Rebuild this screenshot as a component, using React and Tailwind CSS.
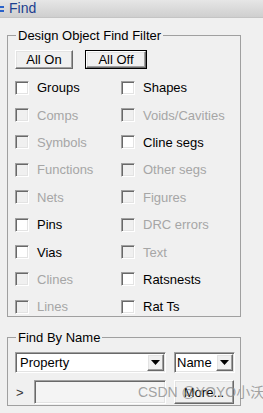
import React from "react";

const rows = [
  ["Groups", true, "Shapes", true],
  ["Comps", false, "Voids/Cavities", false],
  ["Symbols", false, "Cline segs", true],
  ["Functions", false, "Other segs", false],
  ["Nets", false, "Figures", false],
  ["Pins", true, "DRC errors", false],
  ["Vias", true, "Text", false],
  ["Clines", false, "Ratsnests", true],
  ["Lines", false, "Rat Ts", true],
];

const sunken =
  "border border-t-[#a0a0a0] border-l-[#a0a0a0] border-b-white border-r-white shadow-[inset_1px_1px_0_#696969,inset_-1px_-1px_0_#e3e3e3]";
const raised =
  "border border-t-white border-l-white border-b-[#696969] border-r-[#696969] shadow-[inset_-1px_-1px_0_#a0a0a0,inset_1px_1px_0_#e3e3e3]";

const Check = ({ label, on }) => (
  <div className="flex items-center h-[27.4px]">
    <span className={`w-[14px] h-[14px] shrink-0 ${sunken} ${on ? "bg-white" : "bg-[#f0f0f0]"}`} />
    <span className={`ml-[8px] ${on ? "text-black" : "text-[#a6a6a6]"}`}>{label}</span>
  </div>
);

const Arrow = () => (
  <span className={`w-[17px] h-[17px] flex items-center justify-center bg-[#f0f0f0] ${raised}`}>
    <svg width="9" height="5" viewBox="0 0 9 5">
      <path d="M0 0h9L4.5 5z" fill="#000" />
    </svg>
  </span>
);

export default function App() {
  return (
    <div
      className="relative w-[263px] h-[413px] overflow-hidden bg-[#f0f0f0] text-[13px] leading-[15px] text-black"
      style={{ fontFamily: '"Liberation Sans", Arial, sans-serif' }}
    >
      <div className="h-[18px] flex items-center bg-gradient-to-b from-[#e6e6e6] to-[#cfcfcf] border-b border-[#c4c4c4]">
        <div className="flex flex-col gap-[2px] w-[4px]">
          <span className="h-[2px] bg-[#2a62c9]" />
          <span className="h-[2px] bg-[#2a62c9]" />
        </div>
        <span className="ml-[5px] text-[14px] text-[#1d3f8f]">Find</span>
      </div>

      <fieldset className="mt-[10px] mx-[7px] w-[234px] h-[289px] border border-[#a0a0a0] p-0 m-0">
        <legend className="ml-[8px] px-[2px]">Design Object Find Filter</legend>
        <div className="flex pl-[7px] pt-[7px] gap-[12px]">
          <button className={`w-[58px] h-[19px] flex items-center justify-center bg-[#f0f0f0] ${raised}`}>All On</button>
          <div className="border border-black">
            <button className={`w-[60px] h-[17px] flex items-center justify-center bg-[#f0f0f0] ${raised}`}>All Off</button>
          </div>
        </div>
        <div className="grid grid-cols-[106px_1fr] pl-[7px] mt-[5px]">
          {rows.map(([l, lo, r, ro]) => (
            <React.Fragment key={l}>
              <Check label={l} on={lo} />
              <Check label={r} on={ro} />
            </React.Fragment>
          ))}
        </div>
      </fieldset>

      <fieldset className="mt-[13px] mx-[7px] w-[234px] h-[76px] border border-[#a0a0a0] p-0">
        <legend className="ml-[8px] px-[2px]">Find By Name</legend>
        <div className="flex pl-[7px] pt-[7px] gap-[8px]">
          <div className={`w-[151px] h-[21px] flex items-center justify-between bg-white pl-[4px] pr-[1px] ${sunken}`}>
            <span>Property</span>
            <Arrow />
          </div>
          <div className={`w-[61px] h-[21px] flex items-center justify-between bg-white pl-[2px] pr-[1px] ${sunken}`}>
            <span>Name</span>
            <Arrow />
          </div>
        </div>
        <div className="flex items-center pl-[8px] pt-[7px]">
          <span className="w-[18px] text-[#333]">&gt;</span>
          <div className={`w-[132px] h-[24px] bg-[#f4f4f4] ${sunken}`} />
          <button className={`ml-[8px] w-[60px] h-[24px] flex items-center justify-center bg-[#f0f0f0] ${raised}`}>More...</button>
        </div>
      </fieldset>

      <div
        className="absolute left-[138px] top-[384px] text-[14px] leading-[17px] text-[#8c8c8c]/80 whitespace-nowrap pointer-events-none"
        style={{ fontFamily: '"Liberation Sans", "Noto Sans CJK SC", sans-serif' }}
      >
        CSDN @YOYO小沃
      </div>
    </div>
  );
}
